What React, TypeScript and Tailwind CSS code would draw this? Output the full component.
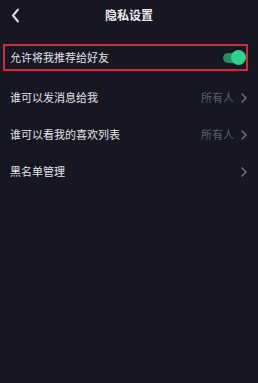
import React from "react";

const font = { fontFamily: '"Noto Sans CJK SC", "Noto Sans", sans-serif' };

function Chevron() {
  return (
    <svg width="6" height="10" viewBox="0 0 6 10" className="ml-[7px]">
      <path d="M1 1l4 4-4 4" fill="none" stroke="#6f7078" strokeWidth="1.5" strokeLinecap="round" strokeLinejoin="round" />
    </svg>
  );
}

function Row({ label, value }: { label: string; value?: string }) {
  return (
    <div className="flex h-[37px] items-center pl-[10px] pr-[11px]">
      <span className="flex-1 text-[11px] text-[#e4e4e8]">{label}</span>
      {value && <span className="text-[11px] text-[#5f606a]">{value}</span>}
      <Chevron />
    </div>
  );
}

export default function App() {
  return (
    <div className="h-[383px] w-[258px] bg-[#161722]" style={font}>
      <div className="relative flex h-[30px] items-center justify-center">
        <svg width="9" height="15" viewBox="0 0 9 15" className="absolute left-[11px] top-[8px]">
          <path d="M7 1.5L2 7.5l5 6" fill="none" stroke="#dcdce0" strokeWidth="2" strokeLinecap="round" strokeLinejoin="round" />
        </svg>
        <span className="text-[12px] font-bold text-[#ececef]">隐私设置</span>
      </div>
      <div className="ml-[3px] mt-[14px] flex h-[27px] w-[245px] items-center border-2 border-[#c82c3d] pl-[5px] pr-[1px]">
        <span className="flex-1 text-[11px] text-[#e4e4e8]">允许将我推荐给好友</span>
        <div className="relative h-[10px] w-[22px] rounded-full bg-[#1f8f63]">
          <div className="absolute right-[-1px] top-[-2.5px] h-[15px] w-[15px] rounded-full bg-[#2fd48c]" />
        </div>
      </div>
      <div className="mt-[8px]">
        <Row label="谁可以发消息给我" value="所有人" />
        <Row label="谁可以看我的喜欢列表" value="所有人" />
        <Row label="黑名单管理" />
      </div>
    </div>
  );
}
